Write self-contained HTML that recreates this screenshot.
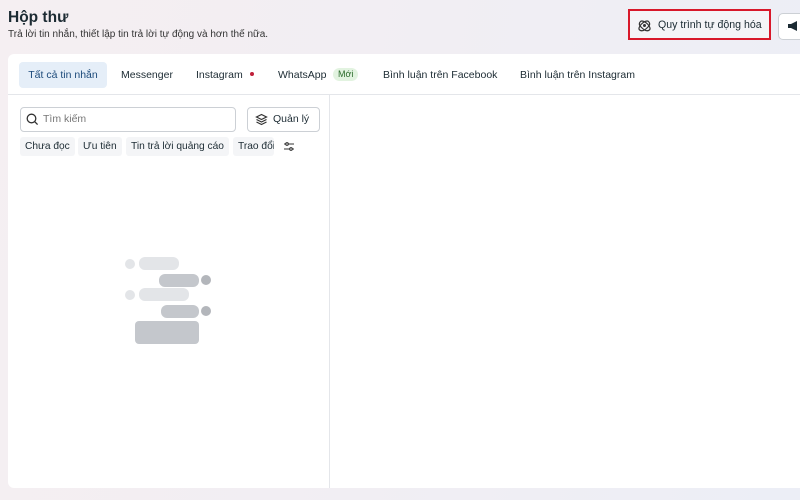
<!DOCTYPE html><html><head><meta charset="utf-8"><style>
*{box-sizing:border-box;margin:0;padding:0}
body{width:800px;height:500px;overflow:hidden;font-family:"Liberation Sans",sans-serif;background:linear-gradient(100deg,#f5eff2 0%,#f1eef3 50%,#eceef6 100%);position:relative;color:#1c2b33}
.a{position:absolute}
.card{left:8px;top:54px;width:800px;height:434px;background:#fff;border-radius:6px}
.tab{position:absolute;top:62px;height:26px;line-height:26px;font-size:10.5px;color:#1c2b33}
.chip{position:absolute;top:137px;height:19px;line-height:19px;font-size:10.2px;background:#f4f5f7;padding:0 5px;border-radius:3px}
.b{position:absolute;border-radius:6px}
</style></head><body>
<div class="a" style="left:8px;top:9px;font-size:15.5px;font-weight:bold">Hộp thư</div>
<div class="a" style="left:8px;top:29px;font-size:10px;color:#333">Trả lời tin nhắn, thiết lập tin trả lời tự động và hơn thế nữa.</div>
<div class="a" style="left:628px;top:9px;width:143px;height:31px;border:2px solid #d8182a;background:#f4f4f7"></div>
<svg class="a" style="left:638px;top:19px" width="13" height="13" viewBox="0 0 13 13" fill="none" stroke="#333" stroke-width="1.2"><path d="M2.5 2.5C4 1 7.5 3 9.5 5s4 5.5 1 6.5S5 10 3 8 1 4 2.5 2.5z"/><path d="M10.5 2.5C9 1 5.5 3 3.5 5s-4 5.5-1 6.5S8 10 10 8s2-4 .5-5.5z"/><circle cx="6.5" cy="6.5" r="0.9" fill="#333"/></svg>
<div class="a" style="left:658px;top:19px;font-size:10.6px">Quy trình tự động hóa</div>
<div class="a" style="left:778px;top:13px;width:40px;height:27px;border:1px solid #ccd0d5;border-radius:5px;background:#fff"></div>
<svg class="a" style="left:787px;top:20px" width="13" height="12" viewBox="0 0 13 12"><path d="M1 4h3l6-3v10L4 8H1z" fill="#1c2b33"/></svg>
<div class="a card"></div>
<div class="tab" style="left:19px;width:88px;background:#e5eef8;border-radius:4px;text-align:center;color:#1c4a7a">Tất cả tin nhắn</div>
<div class="tab" style="left:121px">Messenger</div>
<div class="tab" style="left:196px">Instagram</div>
<div class="a" style="left:250px;top:72px;width:4px;height:4px;border-radius:50%;background:#c0203a"></div>
<div class="tab" style="left:278px">WhatsApp</div>
<div class="a" style="left:333px;top:68px;height:13px;line-height:13px;padding:0 5px;font-size:9px;background:#e2f3e0;color:#2a6b2a;border-radius:7px">Mới</div>
<div class="tab" style="left:383px">Bình luận trên Facebook</div>
<div class="tab" style="left:520px">Bình luận trên Instagram</div>
<div class="a" style="left:8px;top:94px;width:792px;height:1px;background:#e4e6ea"></div>
<div class="a" style="left:329px;top:95px;width:1px;height:393px;background:#e4e6ea"></div>
<div class="a" style="left:20px;top:107px;width:216px;height:25px;border:1px solid #ccd0d5;border-radius:4px"></div>
<svg class="a" style="left:26px;top:113px" width="13" height="13" viewBox="0 0 13 13" fill="none" stroke="#333" stroke-width="1.3"><circle cx="5.5" cy="5.5" r="4.3"/><path d="M8.6 8.6l3 3"/></svg>
<div class="a" style="left:43px;top:113px;font-size:10.5px;color:#777">Tìm kiếm</div>
<div class="a" style="left:247px;top:107px;width:73px;height:25px;border:1px solid #ccd0d5;border-radius:4px"></div>
<svg class="a" style="left:255px;top:113px" width="13" height="13" viewBox="0 0 13 13" fill="none" stroke="#333" stroke-width="1.2"><path d="M6.5 1.5l5 2.5-5 2.5-5-2.5z M1.5 6.5l5 2.5 5-2.5 M1.5 9l5 2.5 5-2.5"/></svg>
<div class="a" style="left:273px;top:113px;font-size:10.5px">Quản lý</div>
<div class="chip" style="left:20px">Chưa đọc</div>
<div class="chip" style="left:78px">Ưu tiên</div>
<div class="chip" style="left:126px">Tin trả lời quảng cáo</div>
<div class="chip" style="left:233px;width:41px;overflow:hidden;white-space:nowrap">Trao đổi</div>
<svg class="a" style="left:283px;top:141px" width="12" height="11" viewBox="0 0 12 11" fill="none" stroke="#333" stroke-width="1.1"><path d="M1 3h10M1 8h10"/><circle cx="4" cy="3" r="1.3" fill="#fff"/><circle cx="8" cy="8" r="1.3" fill="#fff"/></svg>
<div class="b" style="left:125px;top:259px;width:10px;height:10px;border-radius:50%;background:#e3e5e8"></div>
<div class="b" style="left:139px;top:257px;width:40px;height:13px;background:#e3e5e8"></div>
<div class="b" style="left:159px;top:274px;width:40px;height:13px;background:#c4c7cc"></div>
<div class="b" style="left:201px;top:275px;width:10px;height:10px;border-radius:50%;background:#b3b6bb"></div>
<div class="b" style="left:125px;top:290px;width:10px;height:10px;border-radius:50%;background:#e3e5e8"></div>
<div class="b" style="left:139px;top:288px;width:50px;height:13px;background:#e3e5e8"></div>
<div class="b" style="left:161px;top:305px;width:38px;height:13px;background:#c4c7cc"></div>
<div class="b" style="left:201px;top:306px;width:10px;height:10px;border-radius:50%;background:#b3b6bb"></div>
<div class="b" style="left:135px;top:321px;width:64px;height:23px;background:#c4c7cc;border-radius:4px"></div>
</body></html>
